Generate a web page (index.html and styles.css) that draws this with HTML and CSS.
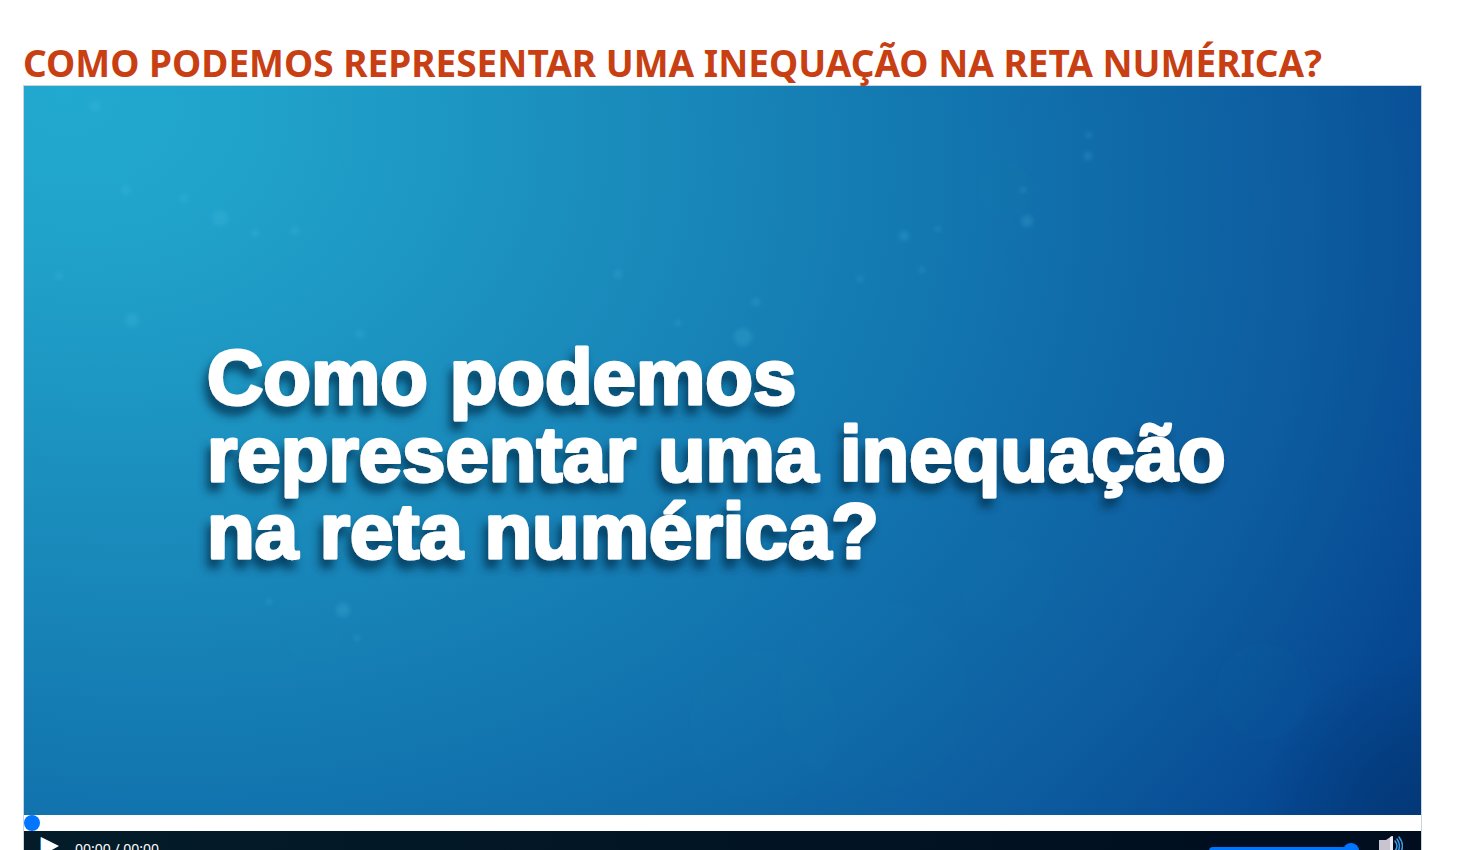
FILE: index.html
```html
<!DOCTYPE html>
<html lang="pt-BR">
<head>
<meta charset="utf-8">
<meta name="viewport" content="width=device-width, initial-scale=1">
<title>Como podemos representar uma inequação na reta numérica?</title>
<link rel="stylesheet" href="styles.css">
</head>
<body>
<main class="lesson">
  <h1 class="lesson-title">COMO PODEMOS REPRESENTAR UMA INEQUAÇÃO NA RETA NUMÉRICA?</h1>
  <section class="player" aria-label="Vídeo">
    <svg class="scene" viewBox="0 0 1397 729" role="img" aria-label="Como podemos representar uma inequação na reta numérica?">
      <defs>
        <radialGradient id="sea" gradientUnits="userSpaceOnUse" cx="0" cy="0" r="1" gradientTransform="translate(40 10) rotate(12) scale(1540 1160)">
          <stop offset="0" stop-color="#22a9d0"/>
          <stop offset=".12" stop-color="#20a3cb"/>
          <stop offset=".36" stop-color="#1a8cbc"/>
          <stop offset=".6" stop-color="#1274ae"/>
          <stop offset=".82" stop-color="#0d5c9f"/>
          <stop offset=".95" stop-color="#064892"/>
          <stop offset="1" stop-color="#04438a"/>
        </radialGradient>
        <radialGradient id="corner" gradientUnits="userSpaceOnUse" cx="1397" cy="729" r="160">
          <stop offset="0" stop-color="#03316b" stop-opacity=".6"/>
          <stop offset="1" stop-color="#03316b" stop-opacity="0"/>
        </radialGradient>
        <filter id="shade" x="-5%" y="-10%" width="110%" height="125%">
          <feDropShadow dx="-4" dy="9" stdDeviation="5" flood-color="#032f50" flood-opacity=".8"/>
        </filter>
        <filter id="soft"><feGaussianBlur stdDeviation="2"/></filter>
      </defs>
      <rect width="1397" height="729" fill="url(#sea)"/>
      <rect width="1397" height="729" fill="url(#corner)"/>
      <g fill="#4cc4e8" fill-opacity=".2" filter="url(#soft)">
        <circle cx="71" cy="20" r="5"/><circle cx="102" cy="104" r="5"/><circle cx="160" cy="112" r="4"/>
        <circle cx="196" cy="132" r="8"/><circle cx="231" cy="147" r="4"/><circle cx="271" cy="145" r="4"/>
        <circle cx="35" cy="190" r="4"/><circle cx="108" cy="234" r="7"/><circle cx="336" cy="248" r="4"/>
        <circle cx="594" cy="188" r="4"/><circle cx="654" cy="237" r="3"/><circle cx="732" cy="216" r="4"/>
        <circle cx="719" cy="251" r="9"/><circle cx="836" cy="193" r="3"/><circle cx="898" cy="184" r="3"/>
        <circle cx="914" cy="143" r="3"/><circle cx="999" cy="104" r="3"/><circle cx="1003" cy="135" r="6"/>
        <circle cx="1064" cy="70" r="4"/><circle cx="1065" cy="49" r="3"/><circle cx="245" cy="516" r="3"/>
        <circle cx="319" cy="524" r="7"/><circle cx="333" cy="552" r="3"/><circle cx="880" cy="150" r="5"/>
      </g>
      <g fill="#2a91ca" fill-opacity=".03">
        <circle cx="582" cy="204" r="25"/><circle cx="630" cy="262" r="46"/><circle cx="982" cy="104" r="28"/>
        <circle cx="982" cy="500" r="46"/><circle cx="1240" cy="606" r="48"/><circle cx="850" cy="610" r="95"/>
        <circle cx="740" cy="640" r="75"/><circle cx="290" cy="550" r="28"/>
      </g>
      <g class="scene-text" filter="url(#shade)">
        <text x="183" y="318">Como podemos</text>
        <text x="183" y="395">representar uma inequação</text>
        <text x="183" y="472">na reta numérica?</text>
      </g>
    </svg>
    <input class="range seek" type="range" min="0" max="100" value="0" aria-label="Progresso">
    <div class="controls">
      <button class="icon-button" type="button" aria-label="Reproduzir">
        <svg class="icon" viewBox="0 0 24 24"><path fill="#1687da" d="M2 2v19l3-1V4z"/><path fill="#fff" d="M3 2l18 9-18 10z"/></svg>
      </button>
      <span class="time">00:00 / 00:00</span>
      <input class="range volume" type="range" min="0" max="100" value="100" aria-label="Volume">
      <button class="icon-button" type="button" aria-label="Silenciar">
        <svg class="icon" viewBox="0 0 24 24"><path fill="#c9c5d0" d="M0 5h7l6-4v20l-6-4H0z"/><path fill="#efedf3" d="M11 2l3-1v20l-3-2z"/><path fill="none" stroke="#389be8" stroke-width="1.5" stroke-linecap="round" d="M16 6q4 5 0 10M18 4q5 7 0 14M20 2q7 9 0 18"/></svg>
      </button>
    </div>
  </section>
</main>
</body>
</html>
```
FILE: styles.css
```css
body {
  margin: 0;
  background: #fff;
  font-family: "Noto Sans", "Open Sans", sans-serif;
}

.lesson {
  padding: 40px 38px 0 23px;
}

.lesson-title {
  margin: 0;
  padding-top: 1px;
  color: #c83f14;
  font-size: 37px;
  font-weight: 700;
  line-height: 44px;
}

.player {
  border: 1px solid #c8d4de;
}

.scene {
  display: block;
  width: 100%;
  height: auto;
}

.scene-text {
  fill: #fff;
  stroke: #fff;
  stroke-width: 3px;
  stroke-linejoin: round;
  font-family: "Liberation Sans", Arial, sans-serif;
  font-size: 78px;
  font-weight: 700;
}

.range {
  display: block;
  height: 16px;
  margin: 0;
  appearance: none;
  background: transparent;
}

.range::-webkit-slider-thumb {
  width: 16px;
  height: 16px;
  appearance: none;
  border: 0;
  border-radius: 50%;
  background: #0075ff;
}

.seek {
  width: 100%;
}

.controls {
  display: flex;
  align-items: center;
  height: 40px;
  padding: 0 18px 0 14px;
  background: linear-gradient(90deg, #041c29, #000d1f);
}

.icon-button {
  width: 24px;
  height: 24px;
  margin-bottom: 8px;
  padding: 0;
  border: 0;
  background: none;
}

.icon {
  display: block;
  width: 24px;
  height: 24px;
}

.time {
  margin: 0 auto 6px 13px;
  color: #fff;
  font-size: 14px;
}

.volume {
  width: 150px;
  margin-right: 20px;
}

.volume::-webkit-slider-runnable-track {
  height: 8px;
  border-radius: 4px;
  background: #0075ff;
}

.volume::-webkit-slider-thumb {
  margin-top: -4px;
}
```
